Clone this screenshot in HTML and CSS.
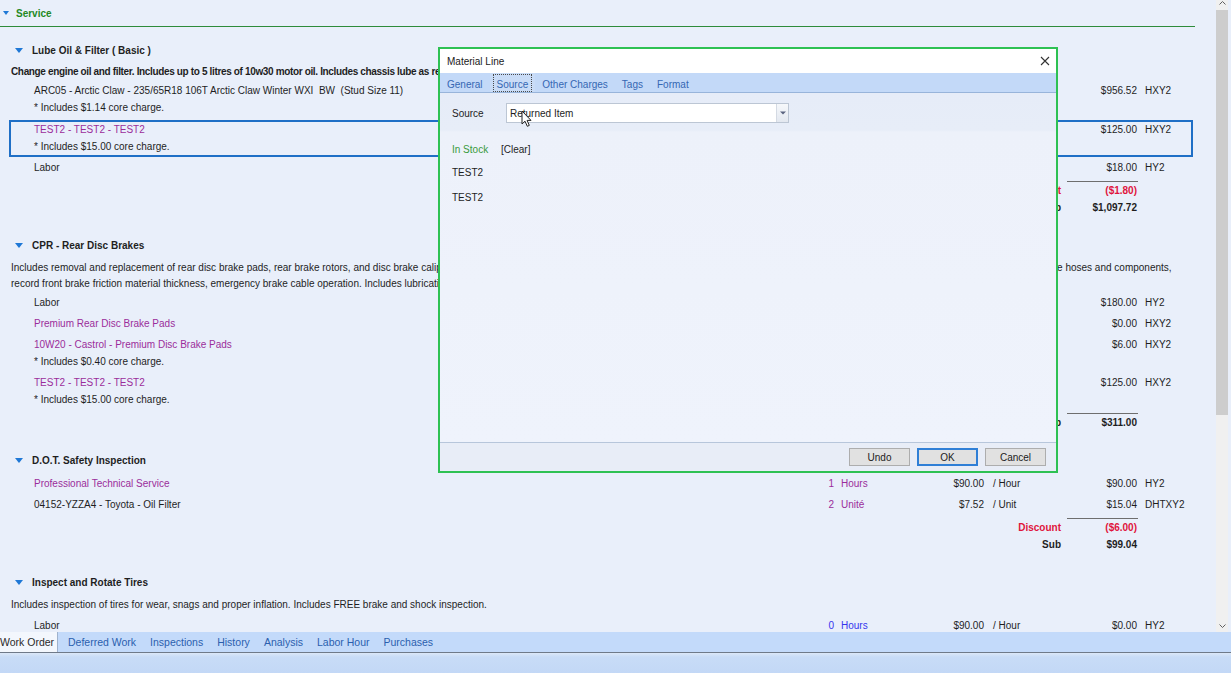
FILE: index.html
```html
<!DOCTYPE html>
<html>
<head>
<meta charset="utf-8">
<title>Work Order</title>
<link rel="stylesheet" href="styles.css">
</head>
<body>
<div class="app">
  <div class="main">
    <div class="content">
      <div class="group-head"><span class="tri-group"></span>Service</div>

      <div class="job first">
        <div class="job-head"><span class="tri"></span>Lube Oil &amp; Filter ( Basic )</div>
        <div class="job-desc bold lube-desc">Change engine oil and filter. Includes up to 5 litres of 10w30 motor oil. Includes chassis lube as required and a courtesy check of all fluid levels.</div>
        <div class="line tight"><span class="d">ARC05 - Arctic Claw - 235/65R18 106T Arctic Claw Winter WXI  BW  (Stud Size 11)</span><span class="a">$956.52</span><span class="t">HXY2</span></div>
        <div class="note">* Includes $1.14 core charge.</div>
        <div class="selected">
          <div class="line"><span class="d purple">TEST2 - TEST2 - TEST2</span><span class="a">$125.00</span><span class="t">HXY2</span></div>
          <div class="note">* Includes $15.00 core charge.</div>
        </div>
        <div class="line tight"><span class="d">Labor</span><span class="a">$18.00</span><span class="t">HY2</span></div>
        <div class="rule"><span></span></div>
        <div class="line total"><span class="lbl red">Discount</span><span class="a red">($1.80)</span></div>
        <div class="line total"><span class="lbl">Sub</span><span class="a">$1,097.72</span></div>
      </div>

      <div class="job">
        <div class="job-head"><span class="tri"></span>CPR - Rear Disc Brakes</div>
        <div class="job-desc">Includes removal and replacement of rear disc brake pads, rear brake rotors, and disc brake caliper hardware. Inspect rear brake calipers, caliper slides, wheel cylinders, wheel bearings, brake lines, master cylinders, parking brakes, brake hoses and components,<br>record front brake friction material thickness, emergency brake cable operation. Includes lubrication of caliper slide pins and a road test.</div>
        <div class="line tight"><span class="d">Labor</span><span class="a">$180.00</span><span class="t">HY2</span></div>
        <div class="line"><span class="d purple">Premium Rear Disc Brake Pads</span><span class="a">$0.00</span><span class="t">HXY2</span></div>
        <div class="line"><span class="d purple">10W20 - Castrol - Premium Disc Brake Pads</span><span class="a">$6.00</span><span class="t">HXY2</span></div>
        <div class="note">* Includes $0.40 core charge.</div>
        <div class="line"><span class="d purple">TEST2 - TEST2 - TEST2</span><span class="a">$125.00</span><span class="t">HXY2</span></div>
        <div class="note">* Includes $15.00 core charge.</div>
        <div class="rule"><span></span></div>
        <div class="line total"><span class="lbl">Sub</span><span class="a">$311.00</span></div>
      </div>

      <div class="job">
        <div class="job-head"><span class="tri"></span>D.O.T. Safety Inspection</div>
        <div class="line"><span class="d purple">Professional Technical Service</span><span class="q purple">1</span><span class="u purple">Hours</span><span class="p">$90.00</span><span class="per">/ Hour</span><span class="a">$90.00</span><span class="t">HY2</span></div>
        <div class="line"><span class="d">04152-YZZA4 - Toyota - Oil Filter</span><span class="q purple">2</span><span class="u purple">Unité</span><span class="p">$7.52</span><span class="per">/ Unit</span><span class="a">$15.04</span><span class="t">DHTXY2</span></div>
        <div class="rule"><span></span></div>
        <div class="line total"><span class="lbl red">Discount</span><span class="a red">($6.00)</span></div>
        <div class="line total"><span class="lbl">Sub</span><span class="a">$99.04</span></div>
      </div>

      <div class="job">
        <div class="job-head"><span class="tri"></span>Inspect and Rotate Tires</div>
        <div class="job-desc">Includes inspection of tires for wear, snags and proper inflation. Includes FREE brake and shock inspection.</div>
        <div class="line"><span class="d">Labor</span><span class="q blue">0</span><span class="u blue">Hours</span><span class="p">$90.00</span><span class="per">/ Hour</span><span class="a">$0.00</span><span class="t">HY2</span></div>
      </div>
    </div>
    <div class="scrollbar">
      <div class="sb-up"><svg width="7" height="4" viewBox="0 0 7 4"><polyline points="0.5,3.5 3.5,0.5 6.5,3.5" fill="none" stroke="#606060" stroke-width="1"/></svg></div>
      <div class="sb-track"><div class="sb-thumb"></div></div>
      <div class="sb-down"><svg width="7" height="4" viewBox="0 0 7 4"><polyline points="0.5,0.5 3.5,3.5 6.5,0.5" fill="none" stroke="#606060" stroke-width="1"/></svg></div>
    </div>
  </div>
  <div class="tabbar">
    <span class="tab active">Work Order</span>
    <span class="tab">Deferred Work</span>
    <span class="tab">Inspections</span>
    <span class="tab">History</span>
    <span class="tab">Analysis</span>
    <span class="tab">Labor Hour</span>
    <span class="tab">Purchases</span>
  </div>
  <div class="status"></div>
</div>

<div class="dialog">
  <div class="dlg-title">
    <span>Material Line</span>
    <svg class="close" width="10" height="10" viewBox="0 0 10 10"><path d="M1 1 L9 9 M9 1 L1 9" stroke="#333" stroke-width="1.1" fill="none"/></svg>
  </div>
  <div class="dlg-tabs">
    <span class="dtab">General</span>
    <span class="dtab active">Source</span>
    <span class="dtab">Other Charges</span>
    <span class="dtab">Tags</span>
    <span class="dtab">Format</span>
  </div>
  <div class="dlg-body">
    <div class="src-row">
      <span class="src-label">Source</span>
      <div class="combo">
        <span class="combo-text">Returned Item</span>
        <span class="combo-btn"><svg width="6" height="4" viewBox="0 0 6 4"><path d="M0 0.5 L6 0.5 L3 3.5 Z" fill="#5a6480"/></svg></span>
      </div>
    </div>
    <div class="stock-row"><span class="stock">In Stock</span><span>[Clear]</span></div>
    <div class="plain first-plain">TEST2</div>
    <div class="plain second-plain">TEST2</div>
  </div>
  <div class="dlg-foot">
    <button class="btn">Undo</button>
    <button class="btn ok">OK</button>
    <button class="btn">Cancel</button>
  </div>
</div>

<svg class="cursor" width="12" height="18" viewBox="0 0 12 18"><path d="M1 1 L1 14 L4 11.2 L6.3 16.3 L8.3 15.4 L6.1 10.4 L10 10.4 Z" fill="#fff" stroke="#222" stroke-width="1"/></svg>
</body>
</html>
```

FILE: styles.css
```css
* { box-sizing: border-box; }
html, body { margin: 0; padding: 0; }
body {
  width: 1231px;
  height: 673px;
  overflow: hidden;
  position: relative;
  background: #e9effa;
  font-family: "Liberation Sans", Arial, sans-serif;
  font-size: 10px;
  color: #1e1e1e;
}
.app { display: flex; flex-direction: column; height: 673px; }
.main { display: flex; height: 632px; }
.content { flex: 1; overflow: hidden; }

.bold { font-weight: bold; }
.purple { color: #9b2d9b; }
.red { color: #e0143c; }
.blue { color: #3535ee; }

.group-head {
  height: 27px;
  border-bottom: 1px solid #2e8b3a;
  margin-right: 21px;
  color: #23891f;
  font-weight: bold;
  display: flex;
  align-items: center;
  padding-left: 3px;
}
.tri-group {
  width: 0; height: 0;
  border-left: 3px solid transparent;
  border-right: 3px solid transparent;
  border-top: 4px solid #1f78d6;
  margin-right: 7px;
  margin-top: -1px;
}

.job { margin: 18px 23px 0 9px; }
.job.first { margin-top: 12px; }
.job-head {
  height: 22px;
  display: flex;
  align-items: center;
  font-weight: bold;
  padding-left: 6px;
}
.tri {
  width: 0; height: 0;
  border-left: 4px solid transparent;
  border-right: 4px solid transparent;
  border-top: 5px solid #1f78d6;
  margin-right: 9px;
}
.job-desc { padding-left: 2px; line-height: 16px; margin-top: 4px; white-space: nowrap; }
.job-desc.lube-desc { margin-top: 3px; letter-spacing: -0.35px; }

.line {
  display: grid;
  grid-template-columns: 1fr 16px 104px 45px 77px 75px 54px;
  line-height: 17px;
  padding: 0 2px;
  margin-top: 4px;
  white-space: nowrap;
}
.line.tight { margin-top: 2px; }
.line.total { margin-top: 0; }
.line .d { grid-column: 1; padding-left: 23px; white-space: pre; overflow: hidden; }
.line .q { grid-column: 2; text-align: right; padding-right: 2px; }
.line .u { grid-column: 3; padding-left: 5px; }
.line .p { grid-column: 4; text-align: right; padding-right: 1px; }
.line .per { grid-column: 5; padding-left: 8px; }
.line .a { grid-column: 6; text-align: right; }
.line .t { grid-column: 7; padding-left: 8px; }
.line .lbl { grid-column: 5; text-align: right; padding-right: 1px; font-weight: bold; }
.line.total .a { font-weight: bold; }

.note { line-height: 17px; padding-left: 25px; white-space: nowrap; }

.selected { border: 2px solid #1f6fc6; margin-top: 4px; }
.selected .line { padding: 0; margin-top: 0; line-height: 16px; }
.selected .note { padding-left: 23px; }

.rule {
  display: grid;
  grid-template-columns: 1fr 16px 104px 45px 77px 75px 54px;
  padding: 0 2px;
  margin-top: 5px;
}
.rule span { grid-column: 6; border-top: 1px solid #6e6e6e; margin: 0 -1px 0 5px; }

.scrollbar {
  width: 12px;
  margin-right: 3px;
  background: #f0f0f0;
  display: flex;
  flex-direction: column;
}
.sb-up { height: 9px; display: flex; justify-content: center; align-items: flex-start; padding-top: 1px; }
.sb-up svg, .sb-down svg { display: block; }
.sb-track { flex: 1; padding-top: 1px; }
.sb-thumb { height: 405px; background: #cdcdcd; }
.sb-down { height: 12px; display: flex; justify-content: center; align-items: center; }

.tabbar {
  height: 21px;
  background: #c3dafa;
  border-bottom: 1px solid #6f7a89;
  display: flex;
  font-size: 10.5px;
}
.tab { padding: 0 7px; line-height: 20px; color: #2b5fae; white-space: nowrap; }
.tab.active {
  width: 58px;
  background: #f3f7fd;
  color: #2a2a2a;
  padding: 0;
  border-right: 1px solid #9fb2cc;
  margin-right: 3px;
}
.status { flex: 1; background: linear-gradient(#dce8f8, #c8dcf7 4px, #c3d8f6); }

.dialog {
  position: absolute;
  left: 438px;
  top: 47px;
  width: 620px;
  height: 426px;
  border: 2px solid #2ec153;
  background: #eef2fb;
  display: flex;
  flex-direction: column;
}
.dlg-title {
  height: 24px;
  background: #fff;
  display: flex;
  align-items: center;
  justify-content: space-between;
  padding: 0 6px 0 7px;
  color: #1a1a1a;
}
.dlg-title .close { display: block; }
.dlg-tabs {
  height: 20px;
  background: #c3d9f8;
  border-bottom: 1px solid #98b4da;
  display: flex;
  overflow: hidden;
}
.dtab { padding: 0 7px; height: 19px; line-height: 24px; color: #3567b3; position: relative; white-space: nowrap; }
.dtab.active { background: #c9dcf7; }
.dtab.active::after {
  content: "";
  position: absolute;
  left: 3px; right: 3px; top: 1px; bottom: 0;
  border: 1px dotted #4a4a4a;
}
.dlg-body {
  flex: 1;
  padding: 10px 0 0 12px;
  background: linear-gradient(#e6ecf8 0, #e7edf8 37px, #edf1fa 39px, #eff3fc 100%);
}
.src-row { display: flex; align-items: center; height: 20px; }
.src-label { width: 54px; padding-top: 1px; }
.combo {
  width: 283px;
  height: 20px;
  background: #fff;
  border: 1px solid #bcc6d4;
  display: flex;
}
.combo-text { flex: 1; padding-left: 3px; line-height: 19px; }
.combo-btn {
  width: 12px;
  border-left: 1px solid #d4dae3;
  background: linear-gradient(#f6f8fb, #e3e8f0);
  display: flex;
  align-items: center;
  justify-content: center;
}
.combo-btn svg { display: block; }
.stock-row { margin-top: 19px; line-height: 16px; display: flex; }
.stock { width: 49px; color: #3a9b3a; }
.plain { line-height: 16px; }
.first-plain { margin-top: 7px; }
.second-plain { margin-top: 9px; }

.dlg-foot {
  height: 29px;
  border-top: 1px solid #b7c6db;
  background: #e8edf7;
  display: flex;
  justify-content: flex-end;
  align-items: center;
  gap: 7px;
  padding-right: 10px;
}
.btn {
  width: 61px;
  height: 18px;
  border: 1px solid #adadad;
  background: #e1e1e1;
  font-family: inherit;
  font-size: 10px;
  color: #222;
  padding: 0;
  margin: 0;
}
.btn.ok { border: 2px solid #2f7fd6; }

.cursor { position: absolute; left: 521px; top: 110px; }
```
